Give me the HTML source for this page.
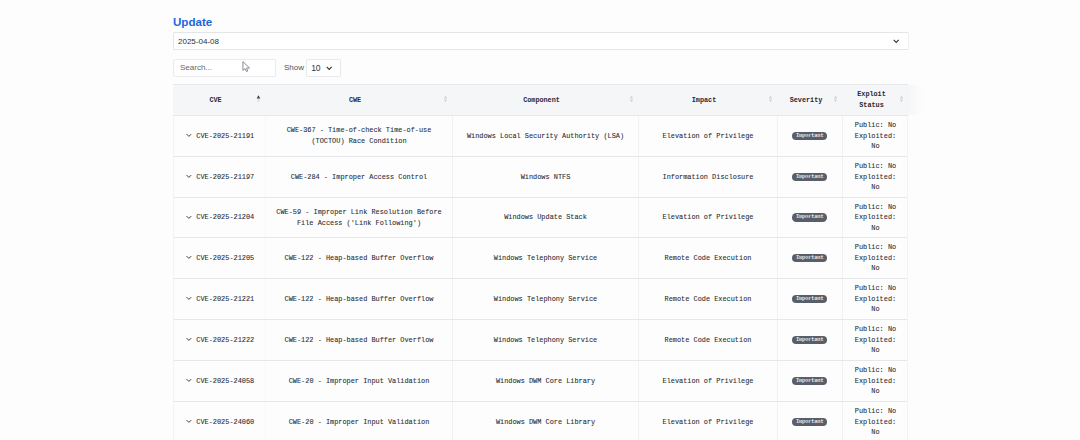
<!DOCTYPE html>
<html><head><meta charset="utf-8">
<style>
html,body{margin:0;padding:0;}
body{width:1080px;height:440px;overflow:hidden;background:#fdfdfd;position:relative;font-family:"Liberation Sans",sans-serif;}
.title{position:absolute;left:173px;top:14px;font-size:11.6px;font-weight:bold;color:#1b66dd;line-height:16px;}
.sel{position:absolute;left:173px;top:32px;width:734px;height:16px;border:1px solid #e3e5e8;border-right-color:#eef0f2;border-radius:2px;background:#fff;}
.sel .v{position:absolute;left:4px;top:0.5px;line-height:16px;font-size:8px;color:#2b2f36;}
.sel svg{position:absolute;left:718.6px;top:5.8px;}
.search{position:absolute;left:173px;top:59px;width:101px;height:16px;border:1px solid #eaebee;border-radius:2px;background:#fff;}
.search span{position:absolute;left:6px;top:0;line-height:16px;font-size:8px;color:#62666d;}
.show{position:absolute;left:284px;top:59px;line-height:18px;font-size:8px;color:#4b5563;}
.ssel{position:absolute;left:306px;top:59px;width:33px;height:16px;border:1px solid #e8e9ec;border-radius:2px;background:#fff;}
.ssel span{position:absolute;left:4.2px;top:0;line-height:16px;font-size:8.6px;letter-spacing:-0.3px;color:#30353c;}
.ssel svg{position:absolute;left:19px;top:5.5px;}
.cursor{position:absolute;left:242px;top:61px;}
.table{position:absolute;left:173px;top:84px;width:735px;height:360px;font-family:"Liberation Mono",monospace;}
.thead{position:absolute;left:0;top:0;width:735px;height:30px;background:#f5f6f8;border-top:1px solid #e6e7ea;border-bottom:1px solid #e6e7ea;}
.h{position:absolute;top:0;height:30px;display:flex;align-items:center;justify-content:center;font-weight:bold;font-size:6.8px;line-height:11px;color:#1f2937;text-align:center;}
.h .hl{margin-right:7px;}
.h .sort{position:absolute;right:4.5px;top:9.8px;}
.row{position:absolute;left:0;width:735px;border-bottom:1px solid #e5e7eb;box-sizing:border-box;background:#fdfdfd;}
.c{position:absolute;top:0;height:100%;display:flex;align-items:center;justify-content:center;font-size:6.9px;line-height:10.6px;color:#272c34;-webkit-text-stroke:0.08px #272c34;text-align:center;box-sizing:border-box;}
.bl{border-left:1px solid #f0f1f3;}
.bl0{border-left:1px solid #f8f8f9;}
.chev{margin-right:4.3px;position:relative;top:-0.4px;}
.c0{justify-content:flex-start;padding-left:13px;}
.badge{display:inline-block;background:#595f6a;color:#fff;font-weight:bold;font-size:5.3px;letter-spacing:-0.12px;line-height:8.5px;height:8.5px;padding:0 3.6px;border-radius:4.25px;position:relative;left:-0.3px;top:0.2px;}
.c > span.t{display:inline-block;}
.hext{position:absolute;left:735px;top:1px;width:16px;height:30px;background:linear-gradient(to right,#f5f6f8,rgba(252,252,253,0));}
.vl{position:absolute;z-index:2;top:32px;width:1px;height:330px;background:#f2f3f5;}

</style></head><body>
<div class="title">Update</div>
<div class="sel"><span class="v">2025-04-08</span><svg width="7" height="5" viewBox="0 0 7 5"><path d="M0.7 0.9 L3.2 3.4 L5.7 0.9" fill="none" stroke="#2f343b" stroke-width="1.1"/></svg></div>
<div class="search"><span>Search...</span></div>
<div class="show">Show</div>
<div class="ssel"><span>10</span><svg width="7" height="5" viewBox="0 0 7 5"><path d="M0.7 0.9 L3.2 3.4 L5.7 0.9" fill="none" stroke="#2f343b" stroke-width="1.1"/></svg></div>
<svg class="cursor" width="10" height="12" viewBox="0 0 10 12"><path d="M0.9 0.6 L0.9 9.4 L3 7.6 L4.5 10.6 L5.8 10 L4.5 7.1 L7.5 7 Z" fill="#fff" stroke="#80858c" stroke-width="0.95" stroke-linejoin="round"/></svg>
<div class="table">
<div class="thead"><div class="h" style="left:0px;width:92px"><span class="hl">CVE</span><svg class="sort" width="5" height="8" viewBox="0 0 5 8"><path d="M2.5 0.3 L4.3 3.5 L0.7 3.5 Z" fill="#3a4048"/><path d="M2.5 7.3 L4.1 4.6 L0.9 4.6 Z" fill="#d9dbdf"/></svg></div>
<div class="h" style="left:92px;width:187px"><span class="hl">CWE</span><svg class="sort" width="5" height="8" viewBox="0 0 5 8"><path d="M2.5 0.6 L4.1 3.4 L0.9 3.4 Z" fill="#cfd2d6"/><path d="M2.5 7.3 L4.1 4.6 L0.9 4.6 Z" fill="#cfd2d6"/></svg></div>
<div class="h" style="left:279px;width:186px"><span class="hl">Component</span><svg class="sort" width="5" height="8" viewBox="0 0 5 8"><path d="M2.5 0.6 L4.1 3.4 L0.9 3.4 Z" fill="#cfd2d6"/><path d="M2.5 7.3 L4.1 4.6 L0.9 4.6 Z" fill="#cfd2d6"/></svg></div>
<div class="h" style="left:465px;width:139px"><span class="hl">Impact</span><svg class="sort" width="5" height="8" viewBox="0 0 5 8"><path d="M2.5 0.6 L4.1 3.4 L0.9 3.4 Z" fill="#cfd2d6"/><path d="M2.5 7.3 L4.1 4.6 L0.9 4.6 Z" fill="#cfd2d6"/></svg></div>
<div class="h" style="left:604px;width:65px"><span class="hl">Severity</span><svg class="sort" width="5" height="8" viewBox="0 0 5 8"><path d="M2.5 0.6 L4.1 3.4 L0.9 3.4 Z" fill="#cfd2d6"/><path d="M2.5 7.3 L4.1 4.6 L0.9 4.6 Z" fill="#cfd2d6"/></svg></div>
<div class="h" style="left:669px;width:66px"><span class="hl">Exploit<br>Status</span><svg class="sort" width="5" height="8" viewBox="0 0 5 8"><path d="M2.5 0.6 L4.1 3.4 L0.9 3.4 Z" fill="#cfd2d6"/><path d="M2.5 7.3 L4.1 4.6 L0.9 4.6 Z" fill="#cfd2d6"/></svg></div>
</div>
<div class="hext"></div>
<div class="vl" style="left:0"></div><div class="vl" style="left:734px"></div>
<div class="row" style="top:32px;height:41px"><div class="c c0" style="left:0px;width:92px"><svg class="chev" width="6" height="5" viewBox="0 0 6 5"><path d="M0.6 1.1 L2.9 3.4 L5.2 1.1" fill="none" stroke="#3a4048" stroke-width="1"/></svg><span class="t">CVE-2025-21191</span></div><div class="c bl0" style="left:92px;width:187px"><span class="t">CWE-367 - Time-of-check Time-of-use<br>(TOCTOU) Race Condition</span></div><div class="c bl" style="left:279px;width:186px"><span class="t">Windows Local Security Authority (LSA)</span></div><div class="c bl" style="left:465px;width:139px"><span class="t">Elevation of Privilege</span></div><div class="c bl" style="left:604px;width:65px"><span class="badge">Important</span></div><div class="c bl" style="left:669px;width:66px"><span class="t">Public: No<br>Exploited:<br>No</span></div></div>
<div class="row" style="top:73px;height:41px"><div class="c c0" style="left:0px;width:92px"><svg class="chev" width="6" height="5" viewBox="0 0 6 5"><path d="M0.6 1.1 L2.9 3.4 L5.2 1.1" fill="none" stroke="#3a4048" stroke-width="1"/></svg><span class="t">CVE-2025-21197</span></div><div class="c bl0" style="left:92px;width:187px"><span class="t">CWE-284 - Improper Access Control</span></div><div class="c bl" style="left:279px;width:186px"><span class="t">Windows NTFS</span></div><div class="c bl" style="left:465px;width:139px"><span class="t">Information Disclosure</span></div><div class="c bl" style="left:604px;width:65px"><span class="badge">Important</span></div><div class="c bl" style="left:669px;width:66px"><span class="t">Public: No<br>Exploited:<br>No</span></div></div>
<div class="row" style="top:114px;height:40px"><div class="c c0" style="left:0px;width:92px"><svg class="chev" width="6" height="5" viewBox="0 0 6 5"><path d="M0.6 1.1 L2.9 3.4 L5.2 1.1" fill="none" stroke="#3a4048" stroke-width="1"/></svg><span class="t">CVE-2025-21204</span></div><div class="c bl0" style="left:92px;width:187px"><span class="t">CWE-59 - Improper Link Resolution Before<br>File Access ('Link Following')</span></div><div class="c bl" style="left:279px;width:186px"><span class="t">Windows Update Stack</span></div><div class="c bl" style="left:465px;width:139px"><span class="t">Elevation of Privilege</span></div><div class="c bl" style="left:604px;width:65px"><span class="badge">Important</span></div><div class="c bl" style="left:669px;width:66px"><span class="t">Public: No<br>Exploited:<br>No</span></div></div>
<div class="row" style="top:154px;height:41px"><div class="c c0" style="left:0px;width:92px"><svg class="chev" width="6" height="5" viewBox="0 0 6 5"><path d="M0.6 1.1 L2.9 3.4 L5.2 1.1" fill="none" stroke="#3a4048" stroke-width="1"/></svg><span class="t">CVE-2025-21205</span></div><div class="c bl0" style="left:92px;width:187px"><span class="t">CWE-122 - Heap-based Buffer Overflow</span></div><div class="c bl" style="left:279px;width:186px"><span class="t">Windows Telephony Service</span></div><div class="c bl" style="left:465px;width:139px"><span class="t">Remote Code Execution</span></div><div class="c bl" style="left:604px;width:65px"><span class="badge">Important</span></div><div class="c bl" style="left:669px;width:66px"><span class="t">Public: No<br>Exploited:<br>No</span></div></div>
<div class="row" style="top:195px;height:41px"><div class="c c0" style="left:0px;width:92px"><svg class="chev" width="6" height="5" viewBox="0 0 6 5"><path d="M0.6 1.1 L2.9 3.4 L5.2 1.1" fill="none" stroke="#3a4048" stroke-width="1"/></svg><span class="t">CVE-2025-21221</span></div><div class="c bl0" style="left:92px;width:187px"><span class="t">CWE-122 - Heap-based Buffer Overflow</span></div><div class="c bl" style="left:279px;width:186px"><span class="t">Windows Telephony Service</span></div><div class="c bl" style="left:465px;width:139px"><span class="t">Remote Code Execution</span></div><div class="c bl" style="left:604px;width:65px"><span class="badge">Important</span></div><div class="c bl" style="left:669px;width:66px"><span class="t">Public: No<br>Exploited:<br>No</span></div></div>
<div class="row" style="top:236px;height:41px"><div class="c c0" style="left:0px;width:92px"><svg class="chev" width="6" height="5" viewBox="0 0 6 5"><path d="M0.6 1.1 L2.9 3.4 L5.2 1.1" fill="none" stroke="#3a4048" stroke-width="1"/></svg><span class="t">CVE-2025-21222</span></div><div class="c bl0" style="left:92px;width:187px"><span class="t">CWE-122 - Heap-based Buffer Overflow</span></div><div class="c bl" style="left:279px;width:186px"><span class="t">Windows Telephony Service</span></div><div class="c bl" style="left:465px;width:139px"><span class="t">Remote Code Execution</span></div><div class="c bl" style="left:604px;width:65px"><span class="badge">Important</span></div><div class="c bl" style="left:669px;width:66px"><span class="t">Public: No<br>Exploited:<br>No</span></div></div>
<div class="row" style="top:277px;height:41px"><div class="c c0" style="left:0px;width:92px"><svg class="chev" width="6" height="5" viewBox="0 0 6 5"><path d="M0.6 1.1 L2.9 3.4 L5.2 1.1" fill="none" stroke="#3a4048" stroke-width="1"/></svg><span class="t">CVE-2025-24058</span></div><div class="c bl0" style="left:92px;width:187px"><span class="t">CWE-20 - Improper Input Validation</span></div><div class="c bl" style="left:279px;width:186px"><span class="t">Windows DWM Core Library</span></div><div class="c bl" style="left:465px;width:139px"><span class="t">Elevation of Privilege</span></div><div class="c bl" style="left:604px;width:65px"><span class="badge">Important</span></div><div class="c bl" style="left:669px;width:66px"><span class="t">Public: No<br>Exploited:<br>No</span></div></div>
<div class="row" style="top:318px;height:41px"><div class="c c0" style="left:0px;width:92px"><svg class="chev" width="6" height="5" viewBox="0 0 6 5"><path d="M0.6 1.1 L2.9 3.4 L5.2 1.1" fill="none" stroke="#3a4048" stroke-width="1"/></svg><span class="t">CVE-2025-24060</span></div><div class="c bl0" style="left:92px;width:187px"><span class="t">CWE-20 - Improper Input Validation</span></div><div class="c bl" style="left:279px;width:186px"><span class="t">Windows DWM Core Library</span></div><div class="c bl" style="left:465px;width:139px"><span class="t">Elevation of Privilege</span></div><div class="c bl" style="left:604px;width:65px"><span class="badge">Important</span></div><div class="c bl" style="left:669px;width:66px"><span class="t">Public: No<br>Exploited:<br>No</span></div></div>

</div>
</body></html>
